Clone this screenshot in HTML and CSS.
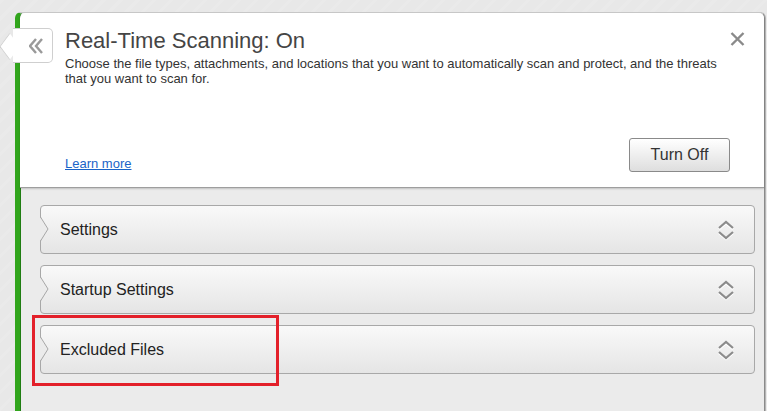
FILE: index.html
```html
<!DOCTYPE html>
<html lang="en">
<head>
    <meta charset="UTF-8" />
    <title>Real-Time Scanning</title>
    <link rel="stylesheet" href="styles.css">
</head>
<body>

    <div class="panel">
        <!-- back tab sits over the green edge -->
        <div class="back-tab">
            <svg width="14" height="16" viewBox="0 0 14 16">
                <polyline points="7,1 1,8 7,15" fill="none" stroke="#9a9a9a" stroke-width="2.4" />
                <polyline points="13,1 7,8 13,15" fill="none" stroke="#9a9a9a" stroke-width="2.4" />
            </svg>
        </div>

        <div class="header">
            <div class="title-row">
                <div>
                    <h1>Real-Time Scanning: On</h1>
                    <p class="desc">Choose the file types, attachments, and locations that you want to automatically scan and protect, and the threats that you want to scan for.</p>
                </div>
                <svg class="close" width="15" height="14" viewBox="0 0 15 14">
                    <path d="M1.5 1 L13.5 13 M13.5 1 L1.5 13" stroke="#8a8a8a" stroke-width="2.4" />
                </svg>
            </div>
            <div class="action-row">
                <a href="#" class="learn-more">Learn more</a>
                <button class="turn-off">Turn Off</button>
            </div>
        </div>

        <div class="sections">
            <div class="section-item">
                <svg class="notch" width="10" height="24" viewBox="0 0 10 24">
                    <polygon points="0,0 8,12 0,24" fill="#ebebeb" />
                    <polyline points="0.5,0 8,12 0.5,24" fill="none" stroke="#a6a6a6" stroke-width="1" />
                </svg>
                <span>Settings</span>
                <svg class="toggle" width="18" height="22" viewBox="0 0 18 22">
                    <path d="M2 9 L9 3 L16 9" fill="none" stroke="#fff" stroke-width="2.4" transform="translate(0,1)" />
                    <path d="M2 9 L9 3 L16 9" fill="none" stroke="#8c8c8c" stroke-width="2.2" />
                    <path d="M2 13 L9 19 L16 13" fill="none" stroke="#fff" stroke-width="2.4" transform="translate(0,1)" />
                    <path d="M2 13 L9 19 L16 13" fill="none" stroke="#8c8c8c" stroke-width="2.2" />
                </svg>
            </div>
            <div class="section-item">
                <svg class="notch" width="10" height="24" viewBox="0 0 10 24">
                    <polygon points="0,0 8,12 0,24" fill="#ebebeb" />
                    <polyline points="0.5,0 8,12 0.5,24" fill="none" stroke="#a6a6a6" stroke-width="1" />
                </svg>
                <span>Startup Settings</span>
                <svg class="toggle" width="18" height="22" viewBox="0 0 18 22">
                    <path d="M2 9 L9 3 L16 9" fill="none" stroke="#fff" stroke-width="2.4" transform="translate(0,1)" />
                    <path d="M2 9 L9 3 L16 9" fill="none" stroke="#8c8c8c" stroke-width="2.2" />
                    <path d="M2 13 L9 19 L16 13" fill="none" stroke="#fff" stroke-width="2.4" transform="translate(0,1)" />
                    <path d="M2 13 L9 19 L16 13" fill="none" stroke="#8c8c8c" stroke-width="2.2" />
                </svg>
            </div>
            <div class="section-item">
                <svg class="notch" width="10" height="24" viewBox="0 0 10 24">
                    <polygon points="0,0 8,12 0,24" fill="#ebebeb" />
                    <polyline points="0.5,0 8,12 0.5,24" fill="none" stroke="#a6a6a6" stroke-width="1" />
                </svg>
                <span>Excluded Files</span>
                <svg class="toggle" width="18" height="22" viewBox="0 0 18 22">
                    <path d="M2 9 L9 3 L16 9" fill="none" stroke="#fff" stroke-width="2.4" transform="translate(0,1)" />
                    <path d="M2 9 L9 3 L16 9" fill="none" stroke="#8c8c8c" stroke-width="2.2" />
                    <path d="M2 13 L9 19 L16 13" fill="none" stroke="#fff" stroke-width="2.4" transform="translate(0,1)" />
                    <path d="M2 13 L9 19 L16 13" fill="none" stroke="#8c8c8c" stroke-width="2.2" />
                </svg>
            </div>
        </div>
    </div>

    <!-- annotation box -->
    <div class="highlight"></div>

</body>
</html>
```

FILE: styles.css
```css
html, body {
    margin: 0;
    height: 100%;
    overflow: hidden;
}
body {
    font-family: "Liberation Sans", Arial, sans-serif;
    background-color: #e8e8e8;
    background-image: repeating-linear-gradient(135deg, rgba(255,255,255,0.1) 0 3px, rgba(255,255,255,0) 3px 12px);
    position: relative;
}
.panel {
    position: relative;
    margin: 12px 0 0 15px;
    width: 744px;
    height: 399px;
    border-left: 5px solid #31a51c;
    border-right: 1px solid #8a8a8a;
    border-top: 1px solid #c9c9c9;
    border-radius: 6px 6px 0 0;
    background-color: #ebebeb;
    box-shadow: 1px 0 0 #b5b5b5, inset 1px 0 0 #1f7d12;
}
.back-tab {
    position: absolute;
    left: -7px;
    top: 15px;
    width: 39px;
    height: 33px;
    background: #fff;
    border: 1px solid #cfcfcf;
    border-left: none;
    border-radius: 0 5px 5px 0;
    display: flex;
    align-items: center;
    justify-content: center;
    z-index: 2;
}
.back-tab::before {
    content: '';
    position: absolute;
    left: -13px;
    top: 8px;
    width: 18px;
    height: 18px;
    background: #fff;
    border-left: 1px solid #cfcfcf;
    border-bottom: 1px solid #cfcfcf;
    transform: scaleX(0.75) rotate(45deg);
}
.back-tab svg {
    position: relative;
    margin-left: 6px;
}
.header {
    background: #fff;
    height: 175px;
    box-sizing: border-box;
    padding: 15px 34px 15px 45px;
    border-bottom: 1px solid #9e9e9e;
    border-radius: 5px 5px 0 0;
    box-shadow: 0 1px 2px rgba(0,0,0,0.18);
    display: flex;
    flex-direction: column;
    justify-content: space-between;
}
.title-row {
    display: flex;
    justify-content: space-between;
    align-items: flex-start;
}
.close {
    margin-top: 4px;
    margin-right: -15px;
    flex-shrink: 0;
}
h1 {
    margin: 0;
    font-size: 22px;
    font-weight: normal;
    color: #454545;
    line-height: 25px;
}
.desc {
    margin: 3px 0 0 0;
    font-size: 13px;
    line-height: 15px;
    color: #333;
}
.action-row {
    display: flex;
    justify-content: space-between;
    align-items: flex-end;
}
.learn-more {
    font-size: 13px;
    color: #1a63c8;
    margin-bottom: 1px;
}
.turn-off {
    width: 101px;
    height: 34px;
    font-family: inherit;
    font-size: 16px;
    color: #333;
    border: 1px solid #8a8a8a;
    border-radius: 3px;
    background: linear-gradient(#ffffff, #dedede);
    padding: 0;
    margin: 0;
}
.sections {
    padding: 17px 9px 0 20px;
    display: flex;
    flex-direction: column;
    gap: 11px;
}
.section-item {
    position: relative;
    height: 49px;
    box-sizing: border-box;
    border: 1px solid #a8a8a8;
    border-radius: 4px;
    background: linear-gradient(#f9f9f9, #e5e5e5);
    display: flex;
    align-items: center;
    justify-content: space-between;
    padding: 0 19px 0 19px;
    font-size: 16px;
    color: #222;
}
.notch {
    position: absolute;
    left: -1px;
    top: 11px;
}
.highlight {
    position: absolute;
    left: 32px;
    top: 315px;
    width: 241px;
    height: 65px;
    border: 3px solid #e3202a;
}
```
